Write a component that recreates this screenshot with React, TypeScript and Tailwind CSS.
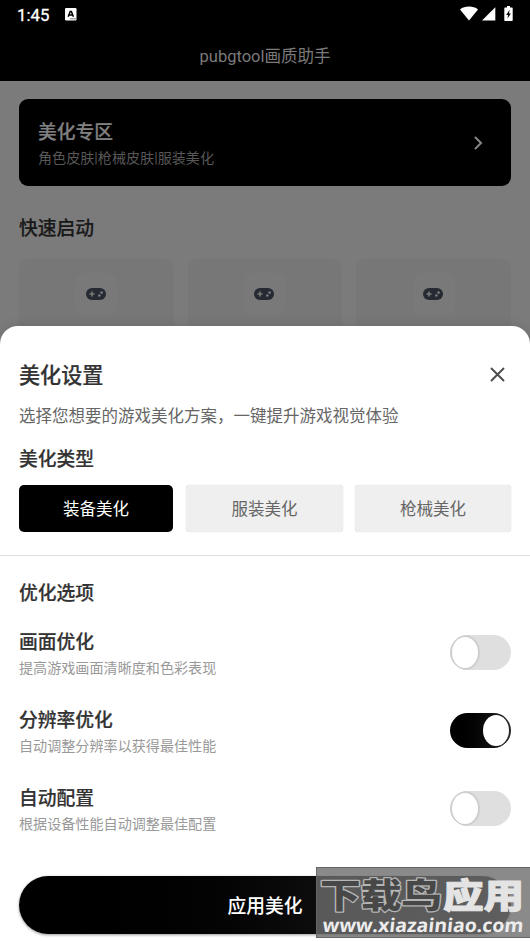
import type { ReactNode } from "react";

const quickTiles = [0, 1, 2];
const types = ["装备美化", "服装美化", "枪械美化"];
const options = [
  { title: "画面优化", detail: "提高游戏画面清晰度和色彩表现", on: false },
  { title: "分辨率优化", detail: "自动调整分辨率以获得最佳性能", on: true },
  { title: "自动配置", detail: "根据设备性能自动调整最佳配置", on: false },
];

function StatusBar() {
  return (
    <div className="flex h-[30px] items-center justify-between bg-black pl-[17px] pr-[17px] text-white">
      <div className="flex items-center gap-[16px]">
        <span className="text-[16.8px] font-normal leading-[30px] [-webkit-text-stroke:0.3px_white]">1:45</span>
        <svg width="12" height="13" viewBox="0 0 12 13" className="-mt-[2px]">
          <rect width="11.5" height="12.5" rx="1.2" fill="#fff" />
          <path d="M3.2 8.7 5.2 3.4h1.2l2 5.3M4 7.1h3.6" fill="none" stroke="#000" strokeWidth="1.5" />
          <path d="M5.5 10.8h1M7.5 10.8h1M9.5 10.8h1" stroke="#000" strokeWidth="1" />
        </svg>
      </div>
      <div className="-mt-[3px] flex items-center">
        <svg width="18" height="15" viewBox="0 0 18 15">
          <path d="M9 14.5 0 3.4C2.4 1.4 5.6.5 9 .5s6.6.9 9 2.9z" fill="#fff" />
        </svg>
        <svg width="14" height="14" viewBox="0 0 14 14" className="ml-[4px]">
          <path d="M13.3.3V13.500H0z" fill="#fff" />
        </svg>
        <svg width="9" height="15" viewBox="0 0 9 15" className="ml-[8px]">
          <path d="M3 0h3v1.500h1.700c.6 0 1 .4 1 1V14c0 .6-.4 1-1 1H1.300c-.6 0-1-.4-1-1V2.500c0-.6.4-1 1-1H3z" fill="#fff" />
          <path d="M5.600 3.800 2.200 8.900h1.900l-.6 3.700 3.400-5.200H5z" fill="#000" />
        </svg>
      </div>
    </div>
  );
}

function Heading({ children, className = "" }: { children: ReactNode; className?: string }) {
  return <h2 className={`text-[18.8px] font-medium leading-[28px] text-[#333] [-webkit-text-stroke:0.2px] ${className}`}>{children}</h2>;
}

function Gamepad() {
  return (
    <svg width="20" height="12" viewBox="0 0 20 12" className="-ml-px">
      <rect width="20" height="12" rx="6" fill="#252a33" />
      <path d="M6 4v4M4 6h4" stroke="#7b7b7b" strokeWidth="1.5" strokeLinecap="round" />
      <circle cx="15.600" cy="4.600" r="1.300" fill="#7b7b7b" />
      <circle cx="13.300" cy="7.500" r="1.300" fill="#7b7b7b" />
    </svg>
  );
}

function Toggle({ on }: { on: boolean }) {
  return on ? (
    <div className="flex h-[35px] w-[61px] items-center justify-end rounded-full bg-linear-to-r from-black to-[#262626] pr-[2px]">
      <div className="h-[31px] w-[26px] rounded-[50%] bg-white" />
    </div>
  ) : (
    <div className="flex h-[35px] w-[61px] items-center overflow-hidden rounded-full bg-[#dfdfdf] pl-[2px]">
      <div className="h-[31px] w-[26px] rounded-[50%] bg-white shadow-[0_0_1px_2px_#cdcdcd]" />
    </div>
  );
}

function Watermark() {
  return (
    <div className="absolute left-[316px] top-[867px] h-[71px] w-[214px] overflow-hidden border-y border-l border-[#666] bg-[#6d6d6d]/80">
      <svg width="213" height="69" viewBox="0 0 213 69">
        <g fontFamily="'Noto Sans CJK SC', sans-serif" fontSize="34" fontWeight="900" strokeLinejoin="round">
          <text x="3" y="40" textLength="122" lengthAdjust="spacingAndGlyphs" fill="#484848" stroke="#b5b5b5" strokeWidth="2.5" paintOrder="stroke">下载鸟</text>
          <text x="126" y="40" textLength="81" lengthAdjust="spacingAndGlyphs" fill="#e4e4e4" stroke="#e4e4e4" strokeWidth="1">应用</text>
        </g>
        <text transform="translate(5 64) skewX(-6)" textLength="201" lengthAdjust="spacingAndGlyphs" fontFamily="'Open Sans', sans-serif" fontSize="19" fontWeight="700" fill="#ededed">www.xiazainiao.com</text>
      </svg>
    </div>
  );
}

export default function App() {
  return (
    <div className="relative h-[942px] w-[530px] overflow-hidden bg-[#7b7b7b] font-[Roboto,'Noto_Sans_CJK_SC',sans-serif]">
      <StatusBar />
      <header className="flex h-[51px] items-center justify-center bg-black pt-[3px] text-[16.5px] text-[#7a7a7a]">pubgtool画质助手</header>
      <main className="px-[19px] pt-[18px]">
        <section className="flex h-[87px] items-center justify-between rounded-[9px] bg-black pl-[19px] pr-[28px]">
          <div className="pt-[2px]">
            <h1 className="text-[18.8px] font-medium leading-[28px] text-[#808080] [-webkit-text-stroke:0.2px]">美化专区</h1>
            <p className="mt-[1px] text-[14.1px] leading-[21px] text-[#585858]">角色皮肤|枪械皮肤|服装美化</p>
          </div>
          <svg width="9" height="14" viewBox="0 0 9 14">
            <path d="m1.500 1.500 5.500 5.500-5.500 5.500" fill="none" stroke="#858585" strokeWidth="2" strokeLinecap="round" />
          </svg>
        </section>
        <h2 className="mt-[29px] text-[18.8px] font-medium leading-[28px] text-[#191919] [-webkit-text-stroke:0.2px]">快速启动</h2>
        <div className="mt-[16px] grid grid-cols-3 gap-[14px]">
          {quickTiles.map((tile) => (
            <div key={tile} className="flex h-[110px] justify-center rounded-[9px] bg-[#777] pt-[14px]">
              <div className="flex size-[42px] items-center justify-center rounded-[9px] bg-[#797979]">
                <Gamepad />
              </div>
            </div>
          ))}
        </div>
      </main>

      <div className="absolute inset-x-0 top-[326px] flex h-[616px] flex-col rounded-t-[18px] bg-white shadow-[0_0_12px_rgba(0,0,0,0.12)]">
        <div className="mt-[32px] flex h-[32px] items-center justify-between pl-[19px] pr-[25px]">
          <h2 className="pt-[4px] text-[21.1px] font-medium leading-[32px] text-[#333] [-webkit-text-stroke:0.2px]">美化设置</h2>
          <svg width="15" height="15" viewBox="0 0 15 15">
            <path d="m1.500 1.500 12 12m0-12-12 12" fill="none" stroke="#4b4b4b" strokeWidth="1.900" strokeLinecap="round" />
          </svg>
        </div>
        <p className="mt-[15px] pl-[19px] text-[16.5px] leading-[24px] text-[#666]">选择您想要的游戏美化方案，一键提升游戏视觉体验</p>
        <Heading className="mt-[17px] pl-[19px]">美化类型</Heading>
        <div className="mt-[11px] flex h-[47px] gap-[12px] pl-[19px] pr-[19px]">
          {types.map((type, index) => (
            <button
              key={type}
              className={
                index === 0
                  ? "mr-[1px] w-[154px] rounded-[5px] bg-black pt-[3px] text-[16.5px] text-white"
                  : index === 1
                    ? "w-[157px] rounded-[4px] bg-[#efefef] pt-[3px] text-[16.5px] text-[#666] shadow-[0_0_1px_rgba(0,0,0,0.25)]"
                    : "flex-1 rounded-[4px] bg-[#efefef] pt-[3px] text-[16.5px] text-[#666] shadow-[0_0_1px_rgba(0,0,0,0.25)]"
              }
            >
              {type}
            </button>
          ))}
        </div>
        <div className="mt-[23px] h-px shrink-0 bg-[#dedede]" />
        <Heading className="mt-[24px] pl-[19px]">优化选项</Heading>
        <div className="mt-[5px] flex flex-col px-[19px]">
          {options.map((option) => (
            <div key={option.title} className="flex h-[78px] items-center justify-between">
              <div className="pt-[3px]">
                <Heading>{option.title}</Heading>
                <p className="mt-[1px] text-[14.1px] leading-[21px] text-[#999]">{option.detail}</p>
              </div>
              <Toggle on={option.on} />
            </div>
          ))}
        </div>
        <button className="mx-[19px] mt-[29px] h-[58px] rounded-full bg-linear-to-r from-black to-[#242424] pt-[4px] text-[18.8px] font-medium text-white shadow-[0_1px_3px_rgba(0,0,0,0.4)]">应用美化</button>
      </div>
      <Watermark />
    </div>
  );
}
